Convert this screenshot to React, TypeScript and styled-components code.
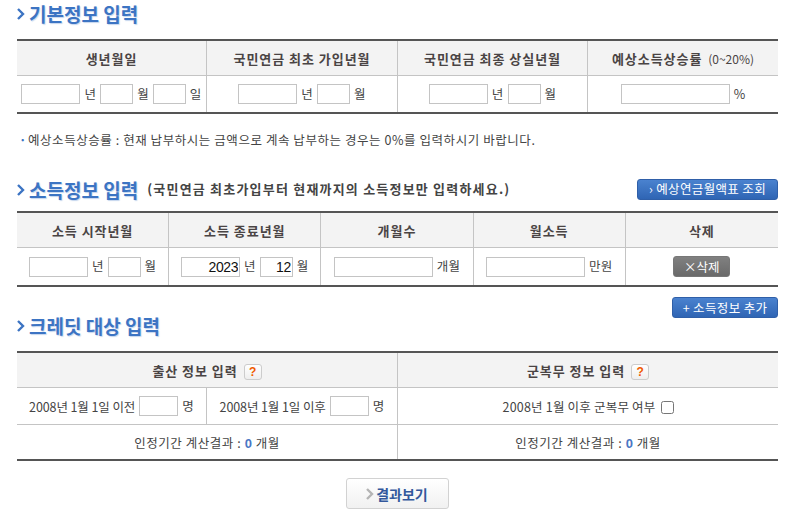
import React, { ReactElement } from 'react'
import styled, { createGlobalStyle } from 'styled-components'

const GlobalStyle = createGlobalStyle`
  body {
    margin: 0;
    background: #fff;
    font-family: "Noto Sans CJK KR", "Liberation Sans", sans-serif;
    font-size: 12px;
    color: #444;
  }
`

const Page = styled.div`
  width: 761px;
  margin-left: 17px;
`

const TitleRow = styled.div<{ $top: number; $bottom: number }>`
  display: flex;
  align-items: center;
  height: 24px;
  margin-top: ${p => p.$top}px;
  margin-bottom: ${p => p.$bottom}px;
`

const Title = styled.h2`
  display: flex;
  align-items: center;
  gap: 4px;
  margin: 0;
  font-size: 19px;
  line-height: 24px;
  font-weight: 700;
  color: #3c74c3;
  text-shadow: 1px 1px 1px rgba(60, 116, 195, 0.3);
`

const TitleNote = styled.span`
  margin-left: 9px;
  margin-top: -3px;
  font-size: 13px;
  font-weight: 700;
  letter-spacing: 1.2px;
  color: #444;
`

const Table = styled.table`
  width: 761px;
  table-layout: fixed;
  border-collapse: separate;
  border-spacing: 0;
  border-top: 2px solid #555;
  border-bottom: 2px solid #555;
`

const HeadCell = styled.th`
  height: 34px;
  padding: 0;
  background: #f3f3f3;
  border-bottom: 1px solid #c4c4c4;
  border-right: 1px solid #c4c4c4;
  font-size: 13px;
  font-weight: 700;
  letter-spacing: 0.95px;
  color: #4a4444;
  &:last-child {
    border-right: 0;
  }
`

const HeadHint = styled.span`
  font-weight: 400;
  font-size: 12px;
  letter-spacing: 0;
  margin-left: 2px;
`

const Cell = styled.td<{ $line?: boolean; $tall?: number }>`
  height: ${p => p.$tall ?? 36}px;
  padding: 0;
  text-align: center;
  border-right: 1px solid #c4c4c4;
  border-bottom: ${p => (p.$line ? '1px solid #c4c4c4' : '0')};
  font-size: 12.5px;
  letter-spacing: 0.2px;
  color: #444;
  white-space: nowrap;
  &:last-child {
    border-right: 0;
  }
`

const Fields = styled.div`
  display: flex;
  align-items: center;
  justify-content: center;
  gap: 4px;
`

const Unit = styled.span`
  margin-top: -2px;
`

const Period = styled.span`
  letter-spacing: -0.1px;
`

const Field = styled.input<{ $w: number }>`
  box-sizing: border-box;
  width: ${p => p.$w}px;
  height: 20px;
  padding: 0 1px 0 0;
  border: 1px solid #c4c4c4;
  background: #fff;
  outline: none;
  text-align: right;
  font-family: "Liberation Sans", sans-serif;
  font-size: 14px;
  letter-spacing: -0.4px;
  color: #111;
`

const Note = styled.p`
  display: flex;
  gap: 1px;
  margin: 18px 0 0;
  padding-left: 2px;
  height: 15px;
  line-height: 15px;
  font-size: 12.5px;
  letter-spacing: 0.56px;
  color: #444;
`

const NoteDot = styled.span`
  color: #3c74c3;
  font-weight: 700;
`

const Spacer = styled.div`
  flex: 1;
`

const BlueButton = styled.button<{ $w: number; $lift?: number }>`
  box-sizing: border-box;
  width: ${p => p.$w}px;
  height: 21px;
  margin-bottom: ${p => p.$lift ?? 0}px;
  padding: 0;
  border: 1px solid #2f5fa8;
  border-radius: 3px;
  background: linear-gradient(#4a82cf, #2f65b4);
  color: #fff;
  font-family: inherit;
  font-size: 12.5px;
  letter-spacing: 0.35px;
  line-height: 18px;
`

const DeleteButton = styled.button`
  box-sizing: border-box;
  width: 57px;
  height: 21px;
  padding: 0;
  border: 1px solid #777;
  border-radius: 3px;
  background: linear-gradient(#808080, #6a6a6a);
  color: #fff;
  font-family: inherit;
  font-size: 12.5px;
  line-height: 18px;
`

const AddRow = styled.div`
  display: flex;
  justify-content: flex-end;
  margin-top: 10px;
`

const Help = styled.span`
  display: inline-block;
  box-sizing: border-box;
  width: 18px;
  height: 16px;
  margin-left: 6px;
  border: 1px solid #ccc;
  border-radius: 3px;
  background: linear-gradient(#fff, #eee);
  color: #f05a00;
  font-family: "Liberation Sans", sans-serif;
  font-size: 12px;
  font-weight: 700;
  letter-spacing: 0;
  line-height: 14px;
`

const Result = styled.span`
  letter-spacing: 0.55px;
`

const Count = styled.b`
  color: #4a76c4;
  font-family: "Liberation Sans", sans-serif;
  font-size: 13px;
`

const Check = styled.input`
  width: 13px;
  height: 13px;
  margin: 3px 0 0 1px;
`

const Footer = styled.div`
  display: flex;
  justify-content: center;
  margin-top: 17px;
  padding-right: 1px;
`

const ResultButton = styled.button`
  display: flex;
  align-items: center;
  justify-content: center;
  gap: 2px;
  box-sizing: border-box;
  width: 103px;
  height: 31px;
  padding: 0;
  border: 1px solid #d2d2d2;
  border-radius: 3px;
  background: linear-gradient(#fff, #f1f1f1);
  color: #33589c;
  font-family: inherit;
  font-size: 14px;
  font-weight: 700;
`

function Chevron({ color = '#3c74c3' }: { color?: string }): ReactElement {
  return (
    <svg width="8" height="12" viewBox="0 0 8 12">
      <path d="M1 1 L6 6 L1 11" fill="none" stroke={color} strokeWidth="2.4" />
    </svg>
  )
}

function YearMonth({ year, month, monthWidth = 33 }: { year?: string; month?: string; monthWidth?: number }): ReactElement {
  return (
    <>
      <Field $w={59} defaultValue={year} />
      <Unit>년</Unit>
      <Field $w={monthWidth} defaultValue={month} />
      <Unit>월</Unit>
    </>
  )
}

export default function App(): ReactElement {
  return (
    <Page>
      <GlobalStyle />
      <TitleRow $top={2} $bottom={13}>
        <Title>
          <Chevron />
          기본정보 입력
        </Title>
      </TitleRow>
      <Table>
        <colgroup>
          <col style={{ width: 190 }} />
          <col style={{ width: 191 }} />
          <col style={{ width: 190 }} />
          <col />
        </colgroup>
        <thead>
          <tr>
            <HeadCell>생년월일</HeadCell>
            <HeadCell>국민연금 최초 가입년월</HeadCell>
            <HeadCell>국민연금 최종 상실년월</HeadCell>
            <HeadCell>
              예상소득상승률 <HeadHint>(0~20%)</HeadHint>
            </HeadCell>
          </tr>
        </thead>
        <tbody>
          <tr>
            <Cell>
              <Fields>
                <YearMonth />
                <Field $w={33} />
                <Unit>일</Unit>
              </Fields>
            </Cell>
            <Cell>
              <Fields>
                <YearMonth />
              </Fields>
            </Cell>
            <Cell>
              <Fields>
                <YearMonth />
              </Fields>
            </Cell>
            <Cell>
              <Fields>
                <Field $w={109} />
                <Unit>%</Unit>
              </Fields>
            </Cell>
          </tr>
        </tbody>
      </Table>
      <Note>
        <NoteDot>·</NoteDot>
        예상소득상승률 : 현재 납부하시는 금액으로 계속 납부하는 경우는 0%를 입력하시기 바랍니다.
      </Note>
      <TitleRow $top={31} $bottom={9}>
        <Title>
          <Chevron />
          소득정보 입력
        </Title>
        <TitleNote>(국민연금 최초가입부터 현재까지의 소득정보만 입력하세요.)</TitleNote>
        <Spacer />
        <BlueButton $w={141} $lift={2}>
          › 예상연금월액표 조회
        </BlueButton>
      </TitleRow>
      <Table>
        <tbody>
          <tr>
            <HeadCell>소득 시작년월</HeadCell>
            <HeadCell>소득 종료년월</HeadCell>
            <HeadCell>개월수</HeadCell>
            <HeadCell>월소득</HeadCell>
            <HeadCell>삭제</HeadCell>
          </tr>
          <tr>
            <Cell $tall={37}>
              <Fields>
                <YearMonth />
              </Fields>
            </Cell>
            <Cell $tall={37}>
              <Fields>
                <YearMonth year="2023" month="12" />
              </Fields>
            </Cell>
            <Cell $tall={37}>
              <Fields>
                <Field $w={99} />
                <Unit>개월</Unit>
              </Fields>
            </Cell>
            <Cell $tall={37}>
              <Fields>
                <Field $w={99} />
                <Unit>만원</Unit>
              </Fields>
            </Cell>
            <Cell $tall={37}>
              <DeleteButton>×삭제</DeleteButton>
            </Cell>
          </tr>
        </tbody>
      </Table>
      <AddRow>
        <BlueButton $w={106}>+ 소득정보 추가</BlueButton>
      </AddRow>
      <TitleRow $top={-4} $bottom={13}>
        <Title>
          <Chevron />
          크레딧 대상 입력
        </Title>
      </TitleRow>
      <Table>
        <colgroup>
          <col style={{ width: 190 }} />
          <col style={{ width: 191 }} />
          <col />
        </colgroup>
        <tbody>
          <tr>
            <HeadCell colSpan={2}>
              출산 정보 입력<Help>?</Help>
            </HeadCell>
            <HeadCell>
              군복무 정보 입력<Help>?</Help>
            </HeadCell>
          </tr>
          <tr>
            <Cell $line>
              <Fields>
                <Period>2008년 1월 1일 이전</Period>
                <Field $w={39} />
                <Unit>명</Unit>
              </Fields>
            </Cell>
            <Cell $line>
              <Fields>
                <Period>2008년 1월 1일 이후</Period>
                <Field $w={39} />
                <Unit>명</Unit>
              </Fields>
            </Cell>
            <Cell $line>
              <Fields>
                2008년 1월 이후 군복무 여부
                <Check type="checkbox" />
              </Fields>
            </Cell>
          </tr>
          <tr>
            <Cell colSpan={2} $tall={34}>
              <Result>
                인정기간 계산결과 : <Count>0</Count> 개월
              </Result>
            </Cell>
            <Cell $tall={34}>
              <Result>
                인정기간 계산결과 : <Count>0</Count> 개월
              </Result>
            </Cell>
          </tr>
        </tbody>
      </Table>
      <Footer>
        <ResultButton>
          <Chevron color="#b5b5b5" />
          결과보기
        </ResultButton>
      </Footer>
    </Page>
  )
}
